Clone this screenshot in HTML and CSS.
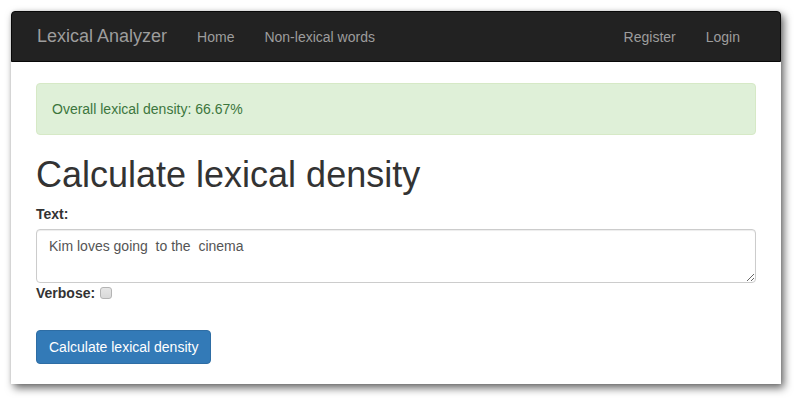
FILE: index.html
```html
<!DOCTYPE html>
<html>
<head>
<meta charset="utf-8">
<title>Lexical Analyzer</title>
<link rel="stylesheet" href="styles.css">
</head>
<body>
<div class="window">
  <nav class="navbar">
    <a class="brand" href="#">Lexical Analyzer</a>
    <ul class="nav">
      <li><a href="#">Home</a></li>
      <li><a href="#">Non-lexical words</a></li>
    </ul>
    <ul class="nav nav-right">
      <li><a href="#">Register</a></li>
      <li><a href="#">Login</a></li>
    </ul>
  </nav>
  <main class="content">
    <div class="alert">Overall lexical density: 66.67%</div>
    <h1 class="title">Calculate lexical density</h1>
    <form class="form">
      <label class="label label-block" for="text">Text:</label>
      <textarea id="text" class="textarea" rows="2">Kim loves going  to the  cinema</textarea>
      <div class="check-row">
        <label class="label" for="verbose">Verbose:</label>
        <input id="verbose" class="checkbox" type="checkbox">
      </div>
      <button type="button" class="btn">Calculate lexical density</button>
    </form>
  </main>
</div>
</body>
</html>
```
FILE: styles.css
```css
* { box-sizing: border-box; }
html {
  margin: 0;
  padding: 0;
  background: #ffffff;
}
body {
  margin: 0;
  padding: 11px 0 0 11px;
  height: 403px;
  overflow: hidden;
  background: #ffffff;
  font-family: "Liberation Sans", Arial, sans-serif;
  font-size: 14px;
  line-height: 20px;
  color: #333333;
}
.window {
  display: flex;
  flex-direction: column;
  width: 770px;
  height: 373px;
  background: #ffffff;
  border-radius: 4px 4px 0 0;
  box-shadow: 3px 4px 9px rgba(0, 0, 0, 0.6), 0 0 3px rgba(0, 0, 0, 0.12);
}
.navbar {
  display: flex;
  align-items: stretch;
  flex: 0 0 51px;
  height: 51px;
  padding: 0 25px 0 10px;
  background: #222222;
  border: 1px solid #080808;
  border-radius: 4px 4px 0 0;
}
.brand {
  display: block;
  padding: 14px 15px 15px;
  font-size: 18px;
  line-height: 20px;
  color: #9d9d9d;
  text-decoration: none;
}
.nav {
  display: flex;
  list-style: none;
  margin: 0;
  padding: 0;
}
.nav-right { margin-left: auto; }
.nav a {
  display: block;
  padding: 15px 15px;
  color: #9d9d9d;
  text-decoration: none;
  line-height: 20px;
}
.content {
  flex: 1 1 auto;
  padding: 21px 25px 0;
}
.alert {
  padding: 15px;
  background: #dff0d8;
  border: 1px solid #d6e9c6;
  border-radius: 4px;
  color: #3c763d;
  margin-bottom: 20px;
}
.title {
  margin: 0 0 10px;
  font-size: 36px;
  font-weight: 500;
  line-height: 39px;
}
.form { margin: 0; }
.label {
  display: inline-block;
  font-weight: bold;
  margin-bottom: 5px;
}
.label-block {
  display: block;
  width: max-content;
}
.textarea {
  display: block;
  width: 100%;
  height: 54px;
  padding: 6px 12px;
  font-family: "Liberation Sans", Arial, sans-serif;
  font-size: 14px;
  line-height: 20px;
  color: #555555;
  background: #ffffff;
  border: 1px solid #cccccc;
  border-radius: 4px;
  box-shadow: inset 0 1px 1px rgba(0, 0, 0, 0.075);
  resize: vertical;
  margin: 0;
}
.check-row {
  display: flex;
  align-items: flex-start;
  gap: 5px;
  height: 20px;
  margin-bottom: 27px;
}
.check-row .label { margin-bottom: 0; }
.checkbox {
  -webkit-appearance: none;
  appearance: none;
  width: 12px;
  height: 12px;
  margin: 4px 0 0;
  background: linear-gradient(#e6e6e6, #d9d9d9);
  border: 1px solid #b4b4b4;
  border-radius: 3px;
}
.btn {
  display: inline-block;
  height: 34px;
  padding: 6px 12px;
  font-family: "Liberation Sans", Arial, sans-serif;
  font-size: 14px;
  line-height: 20px;
  color: #ffffff;
  background: #337ab7;
  border: 1px solid #2e6da4;
  border-radius: 4px;
}
```
